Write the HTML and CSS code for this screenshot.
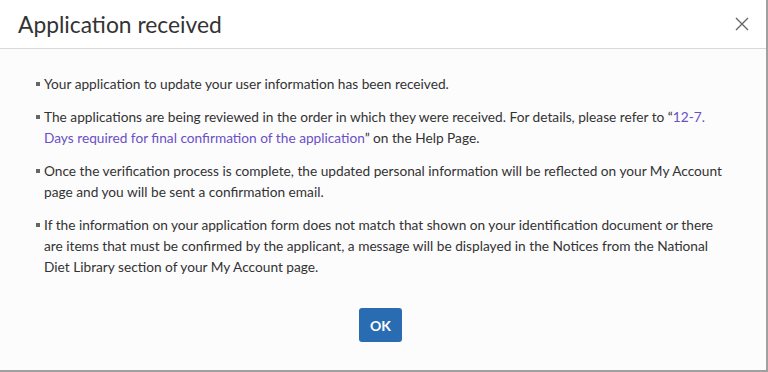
FILE: index.html
```html
<!DOCTYPE html>
<html lang="en">
<head>
  <meta charset="UTF-8">
  <title>Application received</title>
  <link rel="stylesheet" href="styles.css">
</head>
<body>
  <div class="dialog">
    <div class="dialog-header">
      <h2 class="dialog-title">Application received</h2>
      <button class="close-btn" aria-label="Close">
        <svg width="14" height="14" viewBox="0 0 14 14">
          <path d="M1 1L13 13M13 1L1 13" stroke="#666" stroke-width="1.4" fill="none"/>
        </svg>
      </button>
    </div>
    <div class="dialog-body">
      <ul class="notes">
        <li>Your application to update your user information has been received.</li>
        <li>The applications are being reviewed in the order in which they were received. For details, please refer to &ldquo;<a href="#">12-7. Days required for final confirmation of the application</a>&rdquo; on the Help Page.</li>
        <li>Once the verification process is complete, the updated personal information will be reflected on your My Account page and you will be sent a confirmation email.</li>
        <li>If the information on your application form does not match that shown on your identification document or there are items that must be confirmed by the applicant, a message will be displayed in the Notices from the National Diet Library section of your My Account page.</li>
      </ul>
      <div class="actions">
        <button class="ok-btn">OK</button>
      </div>
    </div>
  </div>
</body>
</html>
```

FILE: styles.css
```css
body {
  margin: 0;
  font-family: 'Lato', 'Liberation Sans', sans-serif;
  background: #fff;
}
.dialog {
  width: 766px;
  height: 370px;
  border-right: 2px solid #a0a0a0;
  border-bottom: 2px solid #a0a0a0;
  background: #fcfcfd;
  display: flex;
  flex-direction: column;
}
.dialog-header {
  height: 48px;
  border-bottom: 1px solid #d9d9d9;
  background: #fff;
  display: flex;
  align-items: center;
  justify-content: space-between;
  padding: 0 16px 0 18px;
}
.dialog-title {
  margin: 0;
  font-size: 22.8px;
  font-weight: normal;
  color: #333;
}
.close-btn {
  background: none;
  border: none;
  padding: 0;
  width: 16px;
  height: 16px;
  cursor: pointer;
  display: flex;
  align-items: center;
  justify-content: center;
}
.dialog-body {
  padding: 24px 31px 0 36px;
}
.notes {
  list-style: none;
  margin: 0;
  padding: 0;
  font-size: 13.7px;
  line-height: 21px;
  color: #333;
}
.notes li {
  position: relative;
  padding-left: 8px;
  margin-bottom: 12px;
}
.notes li::before {
  content: "";
  position: absolute;
  left: 0;
  top: 9px;
  width: 4px;
  height: 4px;
  background: #666;
}
.notes a {
  color: #6a4fc6;
  text-decoration: none;
}
.actions {
  display: flex;
  justify-content: center;
  padding-top: 19px;
  padding-right: 10px;
}
.ok-btn {
  width: 43px;
  height: 34px;
  border: none;
  border-radius: 3px;
  background: #2a6cb1;
  color: #fff;
  font-family: inherit;
  font-weight: bold;
  font-size: 14px;
  cursor: pointer;
}
```
